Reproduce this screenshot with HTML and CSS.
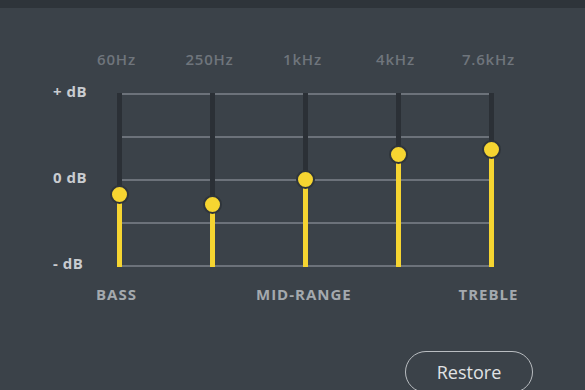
FILE: index.html
```html
<!DOCTYPE html>
<html>
<head>
<meta charset="utf-8">
<link rel="stylesheet" href="styles.css">
</head>
<body>
<div class="topbar"></div>
<main class="eq">
  <div class="freqs">
    <span>60Hz</span><span>250Hz</span><span>1kHz</span><span>4kHz</span><span>7.6kHz</span>
  </div>
  <div class="chart-row">
    <div class="db">
      <span>+ dB</span><span>0 dB</span><span>- dB</span>
    </div>
    <div class="chart">
      <div class="track"><div class="fill" style="height:73px"><span class="knob"></span></div></div>
      <div class="track"><div class="fill" style="height:63px"><span class="knob"></span></div></div>
      <div class="track"><div class="fill" style="height:88px"><span class="knob"></span></div></div>
      <div class="track"><div class="fill" style="height:113px"><span class="knob"></span></div></div>
      <div class="track"><div class="fill" style="height:118px"><span class="knob"></span></div></div>
    </div>
  </div>
  <div class="bands">
    <span>BASS</span><span>MID-RANGE</span><span>TREBLE</span>
  </div>
  <div class="actions">
    <button class="restore">Restore</button>
  </div>
</main>
</body>
</html>
```
FILE: styles.css
```css
html, body {
  margin: 0;
  padding: 0;
  background: #3b4249;
  font-family: "Open Sans", "Noto Sans", sans-serif;
  width: 585px;
  height: 390px;
  overflow: hidden;
}

.topbar {
  height: 8px;
  background: #2e343a;
}

.eq {
  display: flex;
  flex-direction: column;
}

.freqs {
  display: flex;
  margin-left: 70px;
  margin-top: 41px;
  height: 20px;
  align-items: center;
}

.freqs span {
  width: 93px;
  text-align: center;
  color: #6f757c;
  font-size: 15px;
  font-weight: 600;
  letter-spacing: 0.8px;
}

.chart-row {
  display: flex;
  align-items: flex-start;
  margin-top: 24px;
  margin-left: 53px;
}

.db {
  width: 64px;
  height: 174px;
  margin-top: -2px;
  display: flex;
  flex-direction: column;
  justify-content: space-between;
}

.db span {
  height: 2px;
  line-height: 0;
  color: #c9ccd0;
  font-size: 15px;
  font-weight: 700;
  letter-spacing: 0.5px;
  white-space: nowrap;
}

.chart {
  width: 377px;
  height: 174px;
  display: flex;
  justify-content: space-between;
  background: repeating-linear-gradient(to bottom, #6c727a 0, #6c727a 2px, transparent 2px, transparent 43px);
}

.track {
  width: 5px;
  height: 100%;
  background: #2b3036;
  display: flex;
  flex-direction: column;
  justify-content: flex-end;
}

.fill {
  position: relative;
  background: #f6d531;
  width: 5px;
}

.knob {
  position: absolute;
  left: 50%;
  top: 0;
  width: 15px;
  height: 15px;
  margin: -9.5px 0 0 -9.5px;
  border: 2px solid #2f353b;
  border-radius: 50%;
  background: #f6d531;
}

.bands {
  display: flex;
  margin-left: 70px;
  margin-top: 17px;
  height: 20px;
  align-items: center;
}

.bands span {
  width: 93px;
  text-align: center;
  color: #a4a9ae;
  font-size: 15px;
  font-weight: 700;
  letter-spacing: 1px;
  white-space: nowrap;
}

.bands span:nth-child(2) {
  margin-left: 93px;
}

.bands span:nth-child(3) {
  margin-left: 93px;
}

.actions {
  display: flex;
  justify-content: flex-end;
  padding-right: 52px;
  margin-top: 47px;
}

.restore {
  width: 128px;
  height: 42px;
  border: 1.5px solid #b9bdc1;
  border-radius: 21px;
  background: transparent;
  color: #e0e2e4;
  font-family: "Open Sans", "Noto Sans", sans-serif;
  font-size: 18px;
  font-weight: 500;
  padding: 0;
}
```
